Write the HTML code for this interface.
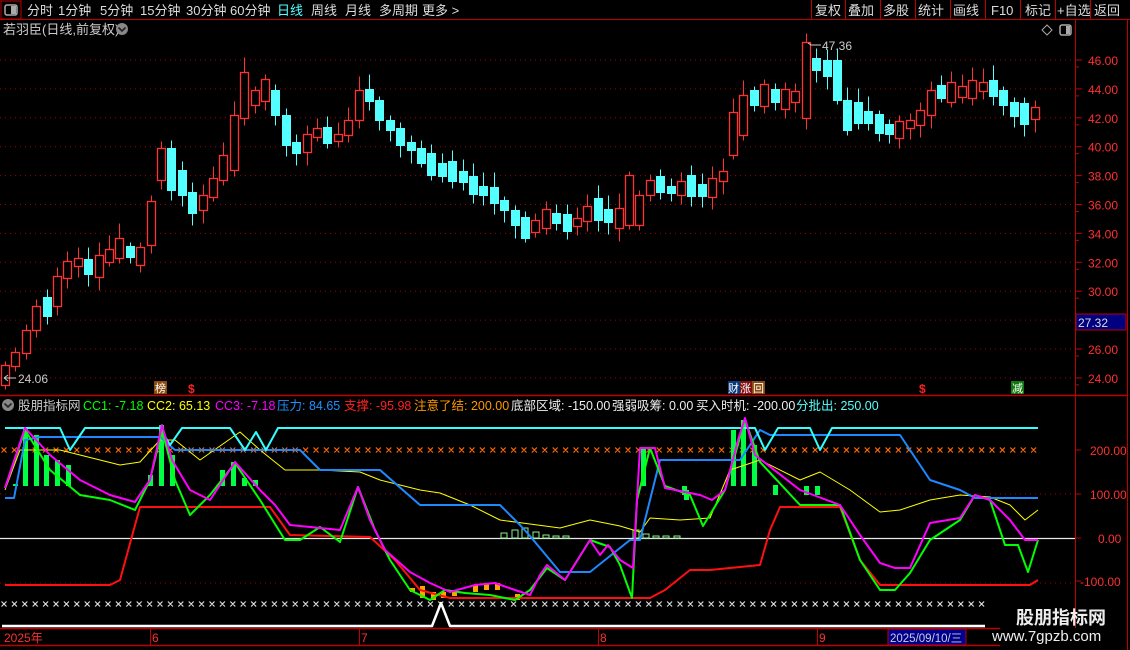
<!DOCTYPE html>
<html><head><meta charset="utf-8">
<style>
html,body{margin:0;padding:0;background:#000;width:1130px;height:650px;overflow:hidden}
svg{display:block}
text{font-family:"Liberation Sans","Noto Sans CJK SC",sans-serif}
</style></head><body>
<svg id="s" width="1130" height="650" viewBox="0 0 1130 650" xmlns="http://www.w3.org/2000/svg">
<rect width="1130" height="650" fill="#000"/>
<rect x="1" y="1" width="20" height="18" fill="none" stroke="#c00000"/>
<rect x="5" y="5" width="12" height="10" rx="2" fill="none" stroke="#aaa" stroke-width="1.5"/>
<rect x="11" y="6" width="5" height="8" fill="#aaa"/>
<line x1="0" y1="19.5" x2="1130" y2="19.5" stroke="#c00000"/>
<g font-size="13" fill="#ddd">
<text x="27" y="15">分时</text><text x="58" y="15">1分钟</text><text x="100" y="15">5分钟</text>
<text x="140" y="15">15分钟</text><text x="186" y="15">30分钟</text><text x="230" y="15">60分钟</text>
<text x="277" y="15" fill="#55ffff">日线</text><text x="311" y="15">周线</text><text x="345" y="15">月线</text>
<text x="379" y="15">多周期</text><text x="422" y="15">更多 &gt;</text>
<text x="815" y="15">复权</text><text x="848" y="15">叠加</text><text x="883" y="15">多股</text>
<text x="918" y="15">统计</text><text x="953" y="15">画线</text><text x="991" y="15">F10</text>
<text x="1025" y="15">标记</text><text x="1057" y="15">+自选</text><text x="1094" y="15">返回</text>
</g>
<g stroke="#c00000">
<line x1="811.5" y1="0" x2="811.5" y2="19"/><line x1="845.5" y1="0" x2="845.5" y2="19"/>
<line x1="880.5" y1="0" x2="880.5" y2="19"/><line x1="915.5" y1="0" x2="915.5" y2="19"/>
<line x1="950.5" y1="0" x2="950.5" y2="19"/><line x1="985.5" y1="0" x2="985.5" y2="19"/>
<line x1="1020.5" y1="0" x2="1020.5" y2="19"/><line x1="1055.5" y1="0" x2="1055.5" y2="19"/>
<line x1="1090.5" y1="0" x2="1090.5" y2="19"/>
</g>
<text x="3" y="34" font-size="13" fill="#ccc">若羽臣(日线,前复权)</text>
<circle cx="122" cy="29" r="6" fill="#888"/><path d="M118.5 27.5l3.5 3.5 3.5-3.5" stroke="#222" stroke-width="1.6" fill="none"/>
<path d="M1047 25l5 5-5 5-5-5z" fill="none" stroke="#aaa"/>
<rect x="1060" y="25" width="11" height="10" rx="2" fill="none" stroke="#aaa" stroke-width="1.5"/><rect x="1066" y="26" width="4" height="8" fill="#aaa"/>
<line x1="1075.5" y1="20" x2="1075.5" y2="628" stroke="#c00000"/>
<line x1="1127.5" y1="20" x2="1127.5" y2="650" stroke="#c00000"/>
<line x1="0" y1="395.5" x2="1127" y2="395.5" stroke="#c00000" stroke-width="1.5"/>
<g id="grid"></g>
<g id="candles"></g>
<text x="18" y="383" font-size="12" fill="#ccc">24.06</text>
<path d="M4 378h12M4 378l4-3M4 378l4 3" stroke="#ccc" fill="none"/>
<text x="822" y="50" font-size="12" fill="#ccc">47.36</text>
<path d="M808 43l3 2h10" stroke="#ccc" fill="none"/>
<rect x="1076" y="314" width="50" height="16" fill="#000080" stroke="#c00000"/>
<text x="1078" y="327" font-size="12" fill="#ddd">27.32</text>
<rect x="154" y="381" width="13" height="13" fill="#8a4a10"/><text x="155" y="392" font-size="11" fill="#fff">榜</text>
<text x="188" y="393" font-size="12" fill="#ff2020" font-weight="bold">$</text>
<rect x="728" y="381" width="12" height="13" fill="#0a3a7a"/><text x="728" y="392" font-size="11" fill="#fff">财</text>
<rect x="740" y="381" width="12" height="13" fill="#801010"/><text x="740" y="392" font-size="11" fill="#fff">涨</text>
<rect x="752" y="381" width="13" height="13" fill="#8a4a10"/><text x="753" y="392" font-size="11" fill="#fff">回</text>
<text x="919" y="393" font-size="12" fill="#ff2020" font-weight="bold">$</text>
<rect x="1011" y="381" width="13" height="13" fill="#107a10"/><text x="1012" y="392" font-size="11" fill="#fff">减</text>
<circle cx="8" cy="405" r="6" fill="#888"/><path d="M4.5 403.5l3.5 3.5 3.5-3.5" stroke="#222" stroke-width="1.6" fill="none"/>
<text y="410" font-size="12.5">
<tspan x="18" fill="#ccc">股朋指标网</tspan><tspan x="83" fill="#00ff00">CC1: -7.18</tspan><tspan x="147" fill="#ffff00">CC2: 65.13</tspan>
<tspan x="215" fill="#ff00ff">CC3: -7.18</tspan><tspan x="277" fill="#2090ff">压力: 84.65</tspan><tspan x="344" fill="#ff2020">支撑: -95.98</tspan>
<tspan x="414" fill="#ff9900">注意了结: 200.00</tspan><tspan x="511" fill="#eee">底部区域: -150.00</tspan><tspan x="612" fill="#eee">强弱吸筹: 0.00</tspan>
<tspan x="696" fill="#eee">买入时机: -200.00</tspan><tspan x="796" fill="#55ffff">分批出: 250.00</tspan></text>
<g id="ind"></g>
<line x1="0" y1="628.5" x2="1000" y2="628.5" stroke="#c00000" stroke-width="1.5"/>
<line x1="0" y1="645.5" x2="1000" y2="645.5" stroke="#c00000" stroke-width="1.5"/>
<g stroke="#c00000"><line x1="150.5" y1="629" x2="150.5" y2="645"/><line x1="359.5" y1="629" x2="359.5" y2="645"/><line x1="598.5" y1="629" x2="598.5" y2="645"/><line x1="817.5" y1="629" x2="817.5" y2="645"/></g>
<g font-size="12" fill="#ff3030"><text x="4" y="642">2025年</text><text x="152" y="642">6</text><text x="361" y="642">7</text><text x="600" y="642">8</text><text x="819" y="642">9</text></g>
<rect x="888" y="629" width="78" height="16" fill="#000090" stroke="#c00000"/>
<text x="890" y="642" font-size="11.5" fill="#ccc">2025/09/10/三</text>
<text x="1016" y="624" font-size="18" font-weight="bold" fill="#eee">股朋指标网</text>
<text x="992" y="641" font-size="15" fill="#eee">www.7gpzb.com</text>
</svg>
<script>
(function(){
var NS="http://www.w3.org/2000/svg";
function el(p,t,a){var e=document.createElementNS(NS,t);for(var k in a)e.setAttribute(k,a[k]);p.appendChild(e);return e;}
var g=document.getElementById('grid');
for(var p=24;p<=46;p+=2){var y=60+(46-p)*14.45;
 el(g,'line',{x1:0,y1:y,x2:1075,y2:y,stroke:'#a00000','stroke-dasharray':'1 4'});
 el(g,'line',{x1:1075,y1:y,x2:1082,y2:y,stroke:'#c00000'});
 var t=el(g,'text',{x:1088,y:y+5,'font-size':12,fill:'#ff3030'});t.textContent=p.toFixed(2);
 el(g,'line',{x1:1075,y1:y+7,x2:1079,y2:y+7,stroke:'#c00000'});}
var c=[365,353,330,306,306,276,262,262,271,260,250,246,256,256,223,164,170,195,210,195,180,155,110,105,90,90,115,145,150,135,130,140,135,120,90,100,120,130,142,150,160,168,170,172,180,190,190,200,210,225,230,222,215,220,225,218,208,210,220,215,225,195,180,188,190,185,185,195,180,172,135,95,100,90,100,98,95,60,65,70,85,110,115,118,128,130,128,120,115,90,92,92,90,88,85,90,105,112,115,110];
var ov={14:[201,245,'r'],15:[148,180,'r'],16:[148,190,'c'],22:[115,170,'r'],23:[72,118,'r'],70:[112,155,'r'],77:[42,118,'r'],78:[58,70,'c'],80:[60,100,'c'],81:[100,130,'c'],60:[175,225,'r']};
var cg=document.getElementById('candles');
for(var i=0;i<c.length;i++){
 var cx=Math.round(5+10.4*i)+0.5;var prev=i?c[i-1]:c[0]+20;
 var d=c[i]-prev;
 var up=d<0||(d==0&&i%2==1);
 var h=Math.max(Math.abs(d),7+(i*7)%16);
 var m=(prev+c[i])/2;var tp=Math.round(m-h/2)+0.5,bt=Math.round(m+h/2)+0.5;
 if(ov[i]){tp=ov[i][0]+0.5;bt=ov[i][1]+0.5;up=ov[i][2]=='r';}
 var hi=tp-4-(i*13%12),lo=bt+4+(i*11%10);
 var col=up?'#ff3232':'#54ffff';
 el(cg,'line',{x1:cx,y1:hi,x2:cx,y2:tp,stroke:col});
 el(cg,'line',{x1:cx,y1:bt,x2:cx,y2:lo,stroke:col});
 if(up)el(cg,'rect',{x:cx-4,y:tp,width:8,height:bt-tp,fill:'#000',stroke:col,'stroke-width':1.3});
 else el(cg,'rect',{x:cx-4.5,y:tp-0.5,width:9,height:bt-tp+1,fill:col});
}
var ig=document.getElementById('ind');
[[450,'200.00'],[494,'100.00'],[538,'0.00'],[581,'-100.00']].forEach(function(a){
 var t=el(ig,'text',{x:a[1].length>6?1080:(a[1].length>4?1090:1098),y:a[0]+5,'font-size':12,fill:'#ff3030'});t.textContent=a[1];
 el(ig,'line',{x1:1075,y1:a[0],x2:1081,y2:a[0],stroke:'#c00000'});});
el(ig,'line',{x1:0,y1:494,x2:1075,y2:494,stroke:'#a00000','stroke-dasharray':'1 4'});
el(ig,'line',{x1:0,y1:583,x2:1075,y2:583,stroke:'#a00000','stroke-dasharray':'1 4'});
el(ig,'line',{x1:0,y1:538.5,x2:1075,y2:538.5,stroke:'#e8e8e8','stroke-width':1.2});
var s1='',s2='',xx;for(xx=4;xx<1040;xx+=10.4){s1+='M'+(xx-2.5)+' 447.5l5 5M'+(xx+2.5)+' 447.5l-5 5';}
el(ig,'path',{d:s1,stroke:'#ff6a00','stroke-width':1.2,fill:'none'});
for(xx=4;xx<985;xx+=10.4){s2+='M'+(xx-2.5)+' 601.5l5 5M'+(xx+2.5)+' 601.5l-5 5';}
el(ig,'path',{d:s2,stroke:'#ddd','stroke-width':1.2,fill:'none'});
function bars(list,col,fill){list.forEach(function(b){el(ig,'rect',{x:b[0],y:b[1],width:b[3]||5,height:b[2]-b[1],fill:fill?col:'none',stroke:fill?'none':col});});}
bars([[13,484,486],[23,428,486],[34,435,486],[44,455,486],[55,460,486],[66,465,486],[148,475,486],[159,425,486],[170,455,486],[220,470,486],[231,462,486],[242,478,486],[253,480,486],[641,448,486],[682,486,495],[731,430,486],[741,420,486],[752,445,486],[773,485,495],[804,486,495],[815,486,495],[684,490,500]],'#00ff44',true);
bars([[410,588,592],[420,586,598],[431,592,600],[441,592,598],[452,592,596],[473,585,592],[484,583,590],[495,583,590],[515,594,600]],'#ffa500',true);
bars([[501,533,538,6],[512,530,538,6],[522,528,538,6],[533,532,538,6],[543,535,538,6],[553,536,538,6],[563,536,538,6],[633,530,538,6],[643,534,538,6],[653,536,538,6],[663,536,538,6],[674,536,538,6]],'#90ee90',false);
function pl(pts,col,w){el(ig,'polyline',{points:pts.map(function(p){return p.join(',')}).join(' '),stroke:col,'stroke-width':w,fill:'none','stroke-linejoin':'round'});}
pl([[5,585],[110,585],[120,580],[140,507],[270,507],[290,535],[370,537],[395,560],[420,590],[450,598],[650,598],[665,590],[690,570],[710,570],[740,567],[760,565],[770,530],[780,507],[840,507],[860,560],[880,585],[1030,585],[1038,580]],'#ff1010',2);
pl([[5,490],[20,450],[60,450],[100,460],[120,465],[140,462],[160,440],[175,440],[200,460],[240,432],[260,450],[285,470],[320,470],[360,472],[380,480],[420,490],[440,493],[470,505],[500,520],[530,524],[560,528],[590,520],[620,526],[640,532],[650,518],[680,520],[710,518],[730,470],[760,460],[800,480],[820,472],[850,490],[880,512],[900,510],[930,500],[960,495],[990,497],[1010,505],[1025,520],[1038,510]],'#ffff00',1);
pl([[5,498],[14,498],[25,440],[40,437],[160,437],[175,450],[300,450],[320,470],[380,470],[420,505],[500,505],[520,525],[530,536],[560,572],[590,572],[630,540],[640,540],[660,460],[740,460],[760,430],[770,435],[900,435],[930,480],[960,490],[975,498],[1038,498]],'#1e88ff',2);
pl([[5,428],[60,428],[70,450],[85,428],[160,428],[170,445],[182,428],[230,428],[245,450],[256,432],[266,450],[278,428],[755,428],[765,450],[778,428],[810,428],[820,450],[832,428],[1038,428]],'#33ffff',2);
pl([[5,488],[25,430],[50,470],[80,495],[110,500],[135,510],[150,480],[162,430],[175,480],[190,515],[210,495],[235,463],[260,500],[285,540],[300,540],[320,527],[340,542],[358,487],[375,530],[390,560],[410,590],[430,600],[445,590],[465,593],[490,595],[515,600],[530,590],[547,568],[565,580],[590,540],[610,547],[620,565],[632,598],[637,500],[650,448],[665,486],[690,495],[703,526],[725,490],[745,420],[760,462],[800,505],[840,505],[860,560],[880,590],[895,590],[910,573],[930,540],[960,520],[975,495],[990,500],[1005,545],[1018,545],[1028,572],[1038,540]],'#00ff00',2);
pl([[5,488],[25,428],[50,455],[80,480],[110,495],[135,502],[150,480],[162,425],[172,460],[190,490],[210,500],[235,462],[260,490],[275,505],[290,525],[320,528],[340,530],[358,487],[370,520],[385,550],[410,572],[430,583],[450,592],[475,585],[495,583],[515,590],[530,595],[540,575],[547,565],[565,580],[590,540],[600,555],[608,545],[620,560],[633,568],[640,448],[655,448],[665,488],[700,495],[712,500],[725,490],[738,440],[745,418],[755,455],[800,490],[840,505],[860,535],[880,563],[895,568],[910,568],[930,523],[960,518],[975,495],[990,500],[1010,520],[1025,540],[1038,540]],'#ff00ff',2);
pl([[2,626],[432,626],[441,603],[450,626],[985,626]],'#ffffff',2.5);
})();
</script>
</body></html>
